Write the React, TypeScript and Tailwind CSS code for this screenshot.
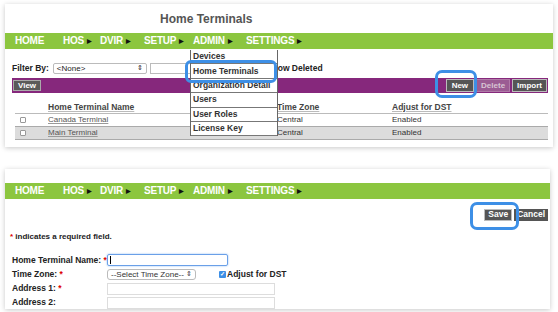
import React from "react";

const navItems = [
  { label: "HOME", w: "w-[48px]", arrow: false },
  { label: "HOS", w: "w-[37px]", arrow: true },
  { label: "DVIR", w: "w-[44px]", arrow: true },
  { label: "SETUP", w: "w-[49px]", arrow: true },
  { label: "ADMIN", w: "w-[53px]", arrow: true },
  { label: "SETTINGS", w: "w-[60px]", arrow: true },
];

function NavBar() {
  return (
    <div className="h-[16px] bg-[#8cc63f] flex items-center pl-[10px]">
      {navItems.map((n) => (
        <div key={n.label} className={`${n.w} flex items-center text-white font-bold text-[10px] leading-none tracking-[-0.2px]`}>
          <span>{n.label}</span>
          {n.arrow && <span className="ml-[3px] text-[6px] text-[#111]">▶</span>}
        </div>
      ))}
    </div>
  );
}

const menu = ["Devices", "Home Terminals", "Organization Detail", "Users", "User Roles", "License Key"];

export default function App() {
  return (
    <div className="relative w-[558px] h-[312px] bg-white overflow-hidden pt-[4px] text-[#222]" style={{ fontFamily: '"Liberation Sans", Arial, sans-serif' }}>
      {/* TOP CARD - list of terminals */}
      <div className="relative mx-[5px] h-[143px] bg-white shadow-[0_1px_5px_rgba(0,0,0,0.22)]">
        <div className="h-[29px] flex items-center pl-[155px] text-[12px] font-bold text-[#555]">Home Terminals</div>
        <NavBar />

        <div className="h-[13px] mt-[13px] flex items-center pl-[7px] text-[8.5px]">
          <span className="font-bold mr-[4px]">Filter By:</span>
          <div className="w-[94px] h-[11px] border border-[#bbb] rounded-[2px] flex items-center justify-between px-[3px] text-[8px]">
            <span>&lt;None&gt;</span>
            <span className="text-[7px]">⇕</span>
          </div>
          <div className="w-[45px] h-[11px] ml-[3px] border border-[#bbb]" />
          <span className="ml-[72px] font-bold">Show Deleted</span>
        </div>

        <div className="mt-[3px] ml-[7px] mr-[5px] h-[15px] bg-[#86287c] flex items-center justify-between px-[1px]">
          <div className="h-[11px] px-[4px] bg-[#5a5a5a] border border-[#aaa] text-white text-[8px] font-bold flex items-center">View</div>
          <div className="flex items-center gap-[2px]">
            <div className="h-[13px] px-[5px] bg-[#555] border border-[#bbb] text-white text-[8px] font-bold flex items-center">New</div>
            <div className="h-[13px] px-[4px] bg-[#9b5c93] border border-[#b07aa8] text-[#d8c6d4] text-[8px] font-bold flex items-center">Delete</div>
            <div className="h-[13px] px-[4px] bg-[#555] border border-[#bbb] text-white text-[8px] font-bold flex items-center">Import</div>
          </div>
        </div>

        <div className="mt-[8px] ml-[10px] mr-[5px] text-[8px]">
          <div className="h-[13px] flex items-center border-b border-[#bbb] font-bold text-[#444] text-[8.5px]">
            <span className="w-[33px]" />
            <span className="w-[229px] underline decoration-[#bbb]">Home Terminal Name</span>
            <span className="w-[115px] underline decoration-[#bbb]">Time Zone</span>
            <span className="underline decoration-[#bbb]">Adjust for DST</span>
          </div>
          {["Canada Terminal", "Main Terminal"].map((t, i) => (
            <div key={t} className={`h-[13px] flex items-center border-b border-[#aaa] ${i === 1 ? "bg-[#dcdcdc]" : ""}`}>
              <span className="w-[33px] pl-[5px]"><span className="block w-[6px] h-[6px] border border-[#999] bg-white rounded-[1px]" /></span>
              <span className="w-[229px] text-[#555] underline decoration-[#999]">{t}</span>
              <span className="w-[115px] text-[#333]">Central</span>
              <span className="text-[#333]">Enabled</span>
            </div>
          ))}
        </div>

        {/* ADMIN dropdown */}
        <div className="absolute left-[185px] top-[46px] w-[88px] bg-white border-x border-[#666] text-[8.5px] font-bold text-[#333]">
          {menu.map((m) => (
            <div key={m} className="h-[14.4px] flex items-center pl-[2px] border-b border-[#777]">{m}</div>
          ))}
        </div>
        <div className="absolute left-[180px] top-[56px] w-[92px] h-[23px] rounded-[6px] border-[3px] border-[#3d8fe6]" />
        <div className="absolute left-[430px] top-[66px] w-[42px] h-[28px] rounded-[7px] border-[3px] border-[#3d8fe6]" />
      </div>

      {/* BOTTOM CARD - new terminal form */}
      <div className="relative mt-[22px] ml-[5px] mr-[8px] h-[140px] bg-white shadow-[0_1px_5px_rgba(0,0,0,0.22)]">
        <div className="h-[14px]" />
        <NavBar />

        <div className="h-[13px] mt-[9px] flex justify-end items-center gap-[2px] pr-[2px]">
          <div className="h-[12px] px-[3px] bg-[#555] border border-[#bbb] text-white text-[8.5px] font-bold flex items-center">Save</div>
          <div className="h-[12px] px-[3px] bg-[#555] text-white text-[8.5px] font-bold flex items-center">Cancel</div>
        </div>
        <div className="absolute left-[465px] top-[33px] w-[49px] h-[28px] rounded-[7px] border-[3px] border-[#3d8fe6]" />

        <div className="mt-[10px] pl-[5px] text-[8px] font-bold"><span className="text-[#d00]">*</span> indicates a required field.</div>

        <div className="mt-[10px] pl-[7px] text-[8.5px] font-bold flex flex-col gap-[1px]">
          <div className="h-[14px] flex items-center">
            <span className="w-[95px]">Home Terminal Name: <span className="text-[#d00]">*</span></span>
            <div className="w-[121px] h-[12px] border border-[#6aa0e8] rounded-[2px] shadow-[0_0_2px_#8bb8f0] flex items-center pl-[2px]"><span className="w-px h-[8px] bg-black" /></div>
          </div>
          <div className="h-[13px] flex items-center">
            <span className="w-[95px]">Time Zone: <span className="text-[#d00]">*</span></span>
            <div className="w-[89px] h-[11px] border border-[#bbb] rounded-[3px] flex items-center justify-between px-[3px] font-normal text-[8px] text-[#333]">
              <span>--Select Time Zone--</span><span className="text-[7px]">⇕</span>
            </div>
            <span className="ml-[23px] w-[7px] h-[7px] bg-[#3d8fe6] rounded-[1px] text-white text-[6px] leading-[7px] text-center">✓</span>
            <span className="ml-[1px]">Adjust for DST</span>
          </div>
          <div className="h-[13px] flex items-center">
            <span className="w-[95px]">Address 1: <span className="text-[#d00]">*</span></span>
            <div className="w-[168px] h-[12px] border border-[#ddd]" />
          </div>
          <div className="h-[13px] flex items-center">
            <span className="w-[95px]">Address 2:</span>
            <div className="w-[168px] h-[12px] border border-[#ddd]" />
          </div>
        </div>
      </div>
    </div>
  );
}
